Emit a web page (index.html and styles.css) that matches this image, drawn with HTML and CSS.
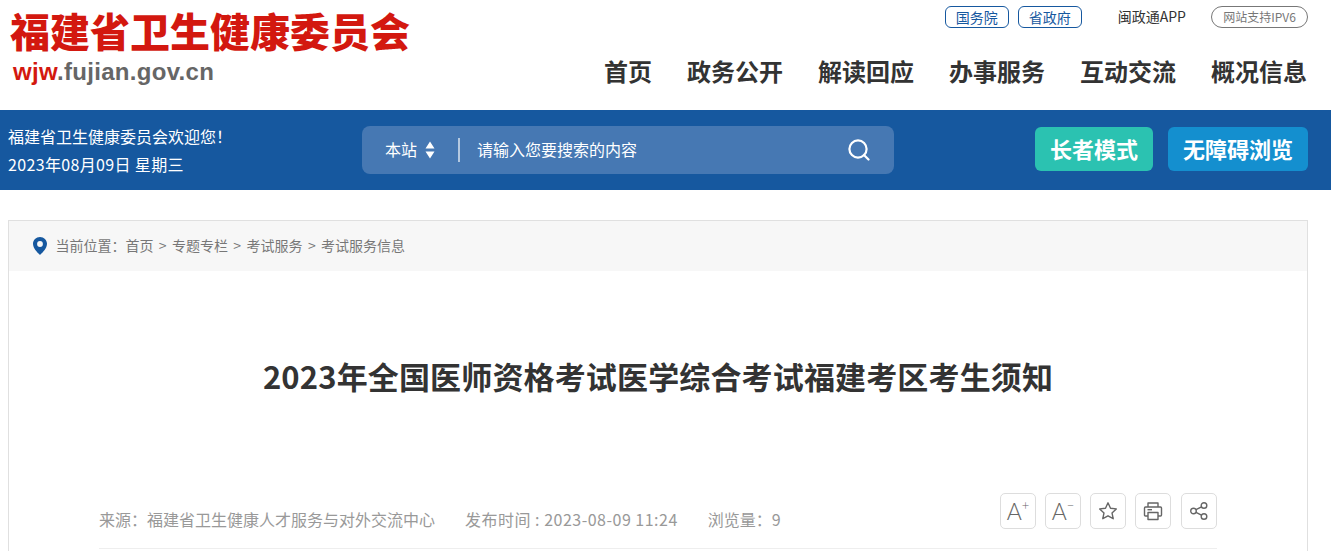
FILE: index.html
```html
<!DOCTYPE html>
<html lang="zh-CN">
<head>
    <meta charset="UTF-8">
    <meta name="viewport" content="width=device-width, initial-scale=1.0">
    <title>2023年全国医师资格考试医学综合考试福建考区考生须知</title>
    <link rel="stylesheet" href="styles.css">
</head>
<body>
    <header class="top">
        <div class="logo">
            <div class="logo-name">福建省卫生健康委员会</div>
            <div class="logo-url"><span class="logo-red">wjw</span>.fujian.gov.cn</div>
        </div>
        <div class="top-right">
            <div class="links">
                <a class="pill">国务院</a>
                <a class="pill">省政府</a>
                <a class="app">闽政通APP</a>
                <a class="pill-gray">网站支持IPV6</a>
            </div>
            <nav class="nav">
                <a>首页</a>
                <a>政务公开</a>
                <a>解读回应</a>
                <a>办事服务</a>
                <a>互动交流</a>
                <a>概况信息</a>
            </nav>
        </div>
    </header>

    <div class="band">
        <div class="welcome">
            <p>福建省卫生健康委员会欢迎您！</p>
            <p class="today">2023年08月09日 星期三</p>
        </div>
        <div class="search">
            <span class="scope">本站</span>
            <svg class="updown" width="10" height="18" viewBox="0 0 10 18"><path d="M5 0.500L9.500 7.500H0.500ZM5 17.500L0.500 10.500H9.500Z" fill="#fff"/></svg>
            <span class="divider"></span>
            <span class="placeholder">请输入您要搜索的内容</span>
            <svg class="glass" width="22" height="22" viewBox="0 0 22 22" fill="none" stroke="#fff" stroke-width="2.200"><circle cx="10" cy="10" r="8.600"/><path d="M16 16L20.500 20.500" stroke-linecap="round"/></svg>
        </div>
        <div class="modes">
            <a class="mode mode-green">长者模式</a>
            <a class="mode mode-blue">无障碍浏览</a>
        </div>
    </div>

    <main class="article">
        <div class="crumbs">
            <svg class="pin" width="14" height="18" viewBox="0 0 14 18"><path fill-rule="evenodd" d="M7 0C3.100 0 0 3 0 6.800C0 11 4 15.300 7 18C10 15.300 14 11 14 6.800C14 3 10.900 0 7 0ZM7 4.100A2.900 2.900 0 1 1 7 9.900A2.900 2.900 0 1 1 7 4.100Z" fill="#16589f"/></svg>
            <span>当前位置：首页</span>
            <span>&gt;</span>
            <span>专题专栏</span>
            <span>&gt;</span>
            <span>考试服务</span>
            <span>&gt;</span>
            <span>考试服务信息</span>
        </div>
        <h1 class="title">2023年全国医师资格考试医学综合考试福建考区考生须知</h1>
        <div class="meta">
            <div class="meta-text">
                <span>来源：福建省卫生健康人才服务与对外交流中心</span>
                <span class="meta-date">发布时间 : 2023-08-09 11:24</span>
                <span>浏览量：9</span>
            </div>
            <div class="tools">
                <a class="tool">A<sup>+</sup></a>
                <a class="tool">A<sup>−</sup></a>
                <a class="tool">
                    <svg width="20" height="20" viewBox="0 0 20 20" fill="none" stroke="#666" stroke-width="1.400" stroke-linejoin="round"><path d="M10 1.800L12.500 7.200L18.300 7.900L14 11.900L15.200 17.700L10 14.800L4.800 17.700L6 11.900L1.700 7.900L7.500 7.200Z"/></svg>
                </a>
                <a class="tool">
                    <svg width="20" height="20" viewBox="0 0 20 20" fill="none" stroke="#666" stroke-width="1.400" stroke-linejoin="round"><path d="M5 6V2H15V6"/><path d="M5 15H2.500Q1.500 15 1.500 14V7Q1.500 6 2.500 6H17.500Q18.500 6 18.500 7V14Q18.500 15 17.500 15H15"/><path d="M5 11.500H15V18.500H5Z"/><path d="M4.500 8.700H9"/></svg>
                </a>
                <a class="tool tool-last">
                    <svg width="20" height="20" viewBox="0 0 20 20" fill="none" stroke="#666" stroke-width="1.400"><circle cx="4.500" cy="10" r="2.800"/><circle cx="15" cy="4.500" r="2.800"/><circle cx="15" cy="15.500" r="2.800"/><path d="M7 8.700L12.500 5.800M7 11.300L12.500 14.200"/></svg>
                </a>
            </div>
        </div>
    </main>
</body>
</html>
```

FILE: styles.css
```css
/* Reset */
body, p, h1 {
    margin: 0;
    padding: 0;
}

body {
    background-color: #fff;
    color: #333;
    font-family: "Noto Sans CJK SC", "Liberation Sans", sans-serif;
    overflow: hidden;
}

/* Header with logo and nav */
.top {
    height: 110px;
    padding: 0 23px 0 10px;
    display: flex;
    justify-content: space-between;
}

.logo-name {
    margin-top: 4px;
    height: 52px;
    font-size: 40px;
    line-height: 52px;
    font-weight: 900;
    color: #d3180f;
    white-space: nowrap;
}

.logo-url {
    margin: 3px 0 0 3px;
    font-family: "Liberation Sans", sans-serif;
    font-size: 24px;
    line-height: 26px;
    font-weight: bold;
    letter-spacing: 0.3px;
    color: #666;
}

.logo-red {
    color: #d3180f;
}

.top-right {
    display: flex;
    flex-direction: column;
    align-items: flex-end;
}

.links {
    margin-top: 6px;
    height: 22px;
    display: flex;
    align-items: center;
}

.pill, .pill-gray {
    box-sizing: border-box;
    height: 22px;
    line-height: 20px;
    font-size: 14px;
    text-align: center;
    border: 1px solid #16589f;
    border-radius: 6px;
    color: #16589f;
    width: 64px;
    margin-right: 9px;
}

.pill-gray {
    width: 97px;
    margin-right: 0;
    border-color: #777;
    border-radius: 11px;
    color: #777;
    font-size: 12px;
}

.app {
    margin: -3px 25px 0 27px;
    font-size: 14px;
    color: #333;
}

.nav {
    margin: 23px 1px 0 0;
    display: flex;
    gap: 35px;
}

.nav a {
    font-size: 24px;
    line-height: 40px;
    font-weight: bold;
    color: #333;
}

/* Blue band */
.band {
    height: 80px;
    background-color: #16589f;
    padding: 0 23px 0 8px;
    display: flex;
    align-items: center;
    color: #fff;
}

.welcome {
    width: 354px;
    font-size: 16px;
    line-height: 28px;
}

.today {
    letter-spacing: 0.35px;
}

.search {
    width: 532px;
    height: 48px;
    box-sizing: border-box;
    padding: 0 24px 0 23px;
    background-color: #4678b3;
    border-radius: 8px;
    display: flex;
    align-items: center;
    font-size: 16px;
}

.scope, .placeholder {
    margin-top: -2px;
}

.updown {
    margin-left: 8px;
}

.divider {
    width: 2px;
    height: 24px;
    background-color: #b5c9e0;
    margin: 0 17px 0 23px;
}

.placeholder {
    flex: 1;
}

.modes {
    margin: -2px 0 0 auto;
    display: flex;
    gap: 15px;
}

.mode {
    height: 44px;
    line-height: 43px;
    border-radius: 6px;
    text-align: center;
    font-size: 22px;
    font-weight: bold;
    color: #fff;
}

.mode-green {
    width: 118px;
    background-color: #2bc2b1;
}

.mode-blue {
    width: 140px;
    background-color: #148fcf;
}

/* Article box */
.article {
    margin: 30px 23px 0 8px;
    border: 1px solid #e0e0e0;
    height: 400px;
}

.crumbs {
    height: 50px;
    background-color: #f7f7f7;
    padding-left: 24px;
    display: flex;
    align-items: center;
    gap: 5.4px;
    font-size: 14px;
    color: #777;
}

.crumbs span {
    margin-top: -2px;
}

.pin {
    margin-right: 3px;
}

.title {
    margin-top: 80px;
    text-align: center;
    font-size: 31px;
    line-height: 50px;
    font-weight: bold;
    letter-spacing: 0.15px;
    color: #333;
}

.meta {
    margin: 92px 90px 0;
    height: 55px;
    border-bottom: 1px solid #eee;
    display: flex;
    justify-content: space-between;
    font-size: 16px;
    color: #999;
}

.meta-text {
    display: flex;
    gap: 30px;
    padding-top: 14px;
    line-height: 24px;
}

.meta-date {
    letter-spacing: 0.5px;
}

.tools {
    display: flex;
    gap: 9px;
}

.tool {
    box-sizing: border-box;
    width: 36px;
    height: 36px;
    border: 1px solid #ddd;
    border-radius: 5px;
    display: flex;
    align-items: center;
    justify-content: center;
    font-family: Lato, "Liberation Sans", sans-serif;
    font-size: 23px;
    font-weight: 300;
    color: #666;
}

.tool-last {
    margin-left: 1px;
}

.tool sup {
    font-size: 13px;
    line-height: 1;
    align-self: flex-start;
    margin-top: 5px;
}
```
